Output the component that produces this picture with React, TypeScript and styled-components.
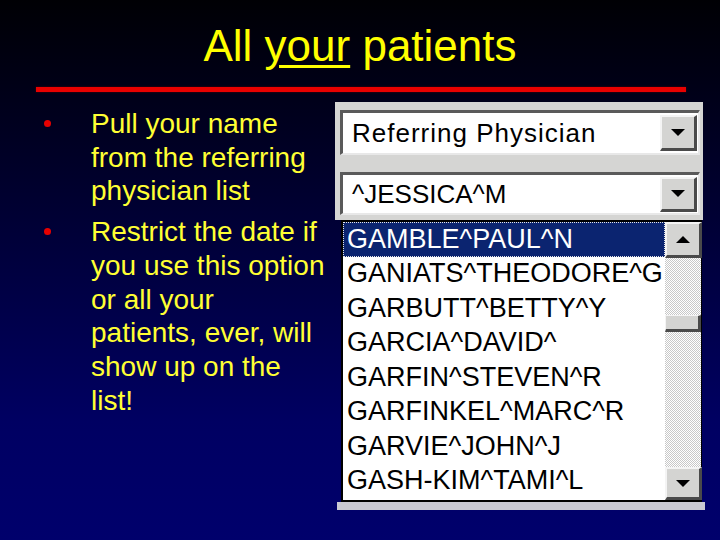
import React from "react";
import styled, { createGlobalStyle } from "styled-components";

const Global = createGlobalStyle`
  html, body { margin: 0; padding: 0; }
  body { width: 720px; height: 540px; overflow: hidden; }
  #root { width: 720px; height: 540px; }
`;

const Slide = styled.div`
  width: 720px;
  height: 540px;
  box-sizing: border-box;
  background: linear-gradient(180deg, #000004 0%, #00001e 22%, #000040 50%, #000062 78%, #00006c 100%);
  font-family: "Liberation Sans", Arial, sans-serif;
  display: flex;
  flex-direction: column;
`;

const Title = styled.h1`
  margin: 0;
  padding-top: 21px;
  height: 65px;
  box-sizing: border-box;
  text-align: center;
  font-weight: normal;
  font-size: 44px;
  line-height: 50px;
  color: #ffff00;
`;

const Under = styled.span`
  text-decoration: underline;
  text-decoration-thickness: 3px;
  text-underline-offset: 4px;
`;

const Rule = styled.div`
  margin: 22px 34px 0 36px;
  height: 5px;
  background: #e80000;
  box-shadow: 0 0 2px #600000;
`;

const Body = styled.div`
  display: flex;
  flex: 1;
`;

const Bullets = styled.ul`
  list-style: none;
  margin: 0;
  padding: 15px 0 0 44px;
  width: 291px;
  display: flex;
  flex-direction: column;
  gap: 7px;
`;

const Item = styled.li`
  display: flex;
  align-items: flex-start;
`;

const Dot = styled.span`
  flex: none;
  width: 7px;
  height: 7px;
  border-radius: 50%;
  background: #e60000;
  margin-top: 13px;
  margin-right: 40px;
`;

const Lines = styled.div`
  display: flex;
  flex-direction: column;
`;

const Line = styled.span`
  font-size: 28px;
  line-height: 33.7px;
  color: #ffff33;
  white-space: nowrap;
`;

const Screen = styled.div`
  margin-top: 10px;
  width: 370px;
  display: flex;
  flex-direction: column;
`;

const TopPanel = styled.div`
  background: #d5d5d3;
  width: 368px;
  box-sizing: border-box;
  padding: 8px 3px 5px 5px;
  display: flex;
  flex-direction: column;
  gap: 17px;
`;

const Combo = styled.div<{ $h: number }>`
  height: ${(p) => p.$h}px;
  box-sizing: border-box;
  background: #fff;
  border-style: solid;
  border-width: 3px 2px 2px 3px;
  border-color: #5a5a5a #e8e8e8 #e8e8e8 #5a5a5a;
  display: flex;
  align-items: center;
  padding: 0 1px 0 9px;
`;

const ComboText = styled.span<{ $ls?: number }>`
  flex: 1;
  font-size: 26px;
  color: #000;
  letter-spacing: ${(p) => p.$ls ?? 0}px;
`;

const Btn = styled.div<{ $h?: number }>`
  flex: none;
  width: 37px;
  height: ${(p) => p.$h ?? 36}px;
  box-sizing: border-box;
  background: #d4d4d2;
  border-style: solid;
  border-width: 2px 3px 3px 2px;
  border-color: #f4f4f4 #4a4a4a #4a4a4a #f4f4f4;
  display: flex;
  align-items: center;
  justify-content: center;
`;

const Arrow = styled.span<{ $up?: boolean }>`
  width: 0;
  height: 0;
  border-left: 7px solid transparent;
  border-right: 7px solid transparent;
  ${(p) => (p.$up ? "border-bottom: 7px solid #000;" : "border-top: 7px solid #000;")}
`;

const ListRow = styled.div`
  display: flex;
`;

const Gap = styled.div`
  width: 6px;
  flex: none;
`;

const ListBox = styled.div`
  width: 361px;
  height: 282px;
  box-sizing: border-box;
  background: #fff;
  border: 2px solid #000;
  border-right: 1px solid #000;
  display: flex;
`;

const Rows = styled.div`
  flex: 1;
  display: flex;
  flex-direction: column;
  min-width: 0;
`;

const Row = styled.div<{ $sel?: boolean }>`
  height: 34.5px;
  flex: none;
  box-sizing: border-box;
  display: flex;
  align-items: center;
  padding-left: 3px;
  font-size: 27px;
  letter-spacing: 0px;
  white-space: nowrap;
  overflow: hidden;
  color: ${(p) => (p.$sel ? "#fff" : "#000")};
  background: ${(p) => (p.$sel ? "#0b2470" : "transparent")};
  border: 1px dotted ${(p) => (p.$sel ? "#e6e6e6" : "transparent")};
`;

const Scroll = styled.div`
  width: 36px;
  flex: none;
  display: flex;
  flex-direction: column;
`;

const Track = styled.div`
  flex: 1;
  background: repeating-conic-gradient(#c8c8c8 0 25%, #ffffff 0 50%) 0 0 / 2px 2px;
  display: flex;
  flex-direction: column;
`;

const Thumb = styled.div`
  margin-top: 57px;
  height: 17px;
  box-sizing: border-box;
  background: #d4d4d2;
  border-style: solid;
  border-width: 1px 3px 3px 1px;
  border-color: #f4f4f4 #4a4a4a #4a4a4a #f4f4f4;
`;

const BottomStrip = styled.div`
  margin-left: 2px;
  width: 368px;
  height: 8px;
  background: #c9c9d2;
`;

const names = [
  "GAMBLE^PAUL^N",
  "GANIATS^THEODORE^G",
  "GARBUTT^BETTY^Y",
  "GARCIA^DAVID^",
  "GARFIN^STEVEN^R",
  "GARFINKEL^MARC^R",
  "GARVIE^JOHN^J",
  "GASH-KIM^TAMI^L",
];

const bullets = [
  ["Pull your name", "from the referring", "physician list"],
  [
    "Restrict the date if",
    "you use this option",
    "or all your",
    "patients, ever, will",
    "show up on the",
    "list!",
  ],
];

export default function App() {
  return (
    <>
      <Global />
      <Slide>
        <Title>
          All <Under>your</Under> patients
        </Title>
        <Rule />
        <Body>
          <Bullets>
            {bullets.map((lines, i) => (
              <Item key={i}>
                <Dot />
                <Lines>
                  {lines.map((l) => (
                    <Line key={l}>{l}</Line>
                  ))}
                </Lines>
              </Item>
            ))}
          </Bullets>
          <Screen>
            <TopPanel>
              <Combo $h={45}>
                <ComboText $ls={1}>Referring Physician</ComboText>
                <Btn>
                  <Arrow />
                </Btn>
              </Combo>
              <Combo $h={43}>
                <ComboText>^JESSICA^M</ComboText>
                <Btn $h={35}>
                  <Arrow />
                </Btn>
              </Combo>
            </TopPanel>
            <ListRow>
              <Gap />
              <ListBox>
                <Rows>
                  {names.map((n, i) => (
                    <Row key={n} $sel={i === 0}>
                      {n}
                    </Row>
                  ))}
                </Rows>
                <Scroll>
                  <Btn $h={36}>
                    <Arrow $up />
                  </Btn>
                  <Track>
                    <Thumb />
                  </Track>
                  <Btn $h={33}>
                    <Arrow />
                  </Btn>
                </Scroll>
              </ListBox>
            </ListRow>
            <BottomStrip />
          </Screen>
        </Body>
      </Slide>
    </>
  );
}
